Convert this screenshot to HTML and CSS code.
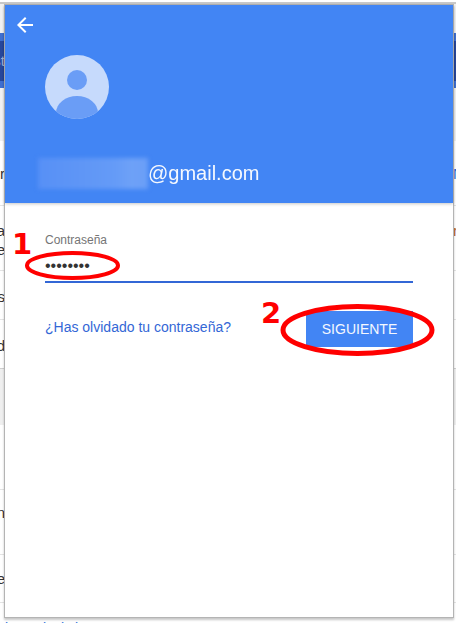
FILE: index.html
```html
<!DOCTYPE html>
<html lang="es">
<head>
<meta charset="utf-8">
<title>Contraseña</title>
<link rel="stylesheet" href="styles.css">
</head>
<body>
<div class="backdrop">
  <div class="bg-top"></div>
  <div class="bg-band"><div class="bg-band-dark"><span class="frag frag-muted"><span>st</span></span></div></div>
  <div class="bg-gray"></div>
  <div class="row r1"><span class="frag"><span>r</span></span><span class="edge edge-blue">N</span></div>
  <div class="row r2"><span class="frag"><span>ra</span><span>te</span></span><span class="edge edge-orange">r</span></div>
  <div class="row r3"><span class="frag"><span>os</span></span></div>
  <div class="row r4"><span class="frag"><span>d</span></span></div>
  <div class="bg-section"></div>
  <div class="row r4b"></div>
  <div class="row r5"><span class="frag"><span>n</span></span></div>
  <div class="row r6"><span class="frag"><span>e</span></span></div>
  <div class="r7"><span class="tip t1">l</span><span class="tip t2">l</span><span class="tip t3">l</span><span class="tip t4">l</span></div>
</div>

<main class="dialog">
  <header class="head">
    <button class="back" aria-label="Atrás">
      <svg viewBox="0 0 24 24" width="24" height="24"><path fill="#fff" d="M20 11H7.83l5.59-5.59L12 4l-8 8 8 8 1.41-1.41L7.83 13H20v-2z"/></svg>
    </button>
    <svg class="avatar" viewBox="0 0 64 64" width="64" height="64">
      <defs><clipPath id="disc"><circle cx="32" cy="32" r="32"/></clipPath></defs>
      <circle cx="32" cy="32" r="32" fill="#c6dafc"/>
      <circle cx="32" cy="25" r="10" fill="#6a9df6"/>
      <ellipse cx="32" cy="58" rx="21" ry="17" fill="#6a9df6" clip-path="url(#disc)"/>
    </svg>
    <div class="email"><span class="smudge"></span><span class="domain">@gmail.com</span></div>
  </header>
  <section class="form">
    <label class="label" for="pw">Contraseña</label>
    <input class="pw" id="pw" type="password" value="password" readonly>
    <div class="actions">
      <a class="forgot" href="#">¿Has olvidado tu contraseña?</a>
      <button class="next">SIGUIENTE</button>
    </div>
  </section>
</main>

<svg class="marks" width="456" height="623" viewBox="0 0 456 623">
  <ellipse cx="72.5" cy="265.5" rx="45.5" ry="12.5" fill="none" stroke="#f00" stroke-width="4"/>
  <ellipse cx="357.5" cy="330" rx="74.5" ry="23.5" fill="none" stroke="#f00" stroke-width="5"/>
</svg>
<span class="num num1">1</span>
<span class="num num2">2</span>
</body>
</html>
```
FILE: styles.css
```css
* { box-sizing: border-box; }
html, body { margin: 0; padding: 0; height: 623px; overflow: hidden; background: #fff; }
body { font-family: "Liberation Sans", Arial, sans-serif; position: relative; }

.backdrop { height: 623px; overflow: hidden; display: flex; flex-direction: column; }
.bg-top { height: 31px; margin-top: 2px; background: #f1f1f1; border-top: 2px solid #c8c8c8; flex: none; }
.bg-band { height: 55px; flex: none; background: #3f6fd0; padding-top: 8px; }
.bg-band-dark { height: 40px; background: #27479b; }
.bg-gray { height: 53px; flex: none; background: #f1f1f1; }
.row { flex: none; border-bottom: 1px solid #e4e4e4; font-size: 15px; line-height: 19px; color: #333; display: flex; justify-content: space-between; align-items: flex-start; }
.frag { display: flex; flex-direction: column; align-items: flex-end; width: 5px; overflow: hidden; }
.frag span { flex: none; white-space: nowrap; }
.frag-muted { color: #9fb0d8; padding-top: 10px; font-size: 15px; line-height: 19px; }
.edge { display: block; width: 3px; overflow: hidden; }
.edge-blue { color: #2f6fd8; }
.edge-orange { color: #b5652a; }
.r1 { height: 65px; padding-top: 23px; }
.r2 { height: 65px; padding-top: 15px; }
.r3 { height: 49px; padding-top: 16px; }
.r4 { height: 49px; padding-top: 16px; border-bottom: 1px solid #cfcfcf; }
.bg-section { height: 56px; flex: none; background: #efefef; }
.r4b { height: 65px; }
.r5 { height: 65px; padding-top: 13px; }
.r6 { height: 48px; padding-top: 14px; }
.r7 { flex: none; height: 20px; padding: 17px 0 0 5px; display: flex; font-size: 14px; line-height: 16px; color: #2f6fd8; }
.tip { display: block; width: 4px; }
.t2 { margin-left: 34px; }
.t3 { margin-left: 14px; }
.t4 { margin-left: 10px; }

.dialog {
  position: absolute; left: 5px; top: 5px; width: 448px; height: 612px;
  background: #fff; display: flex; flex-direction: column;
  box-shadow: 0 0 0 1px #b4b4b4, 0 2px 2px 1px rgba(0,0,0,.22);
}
.head {
  height: 198px; flex: none; background: #4285f4; position: relative; z-index: 1;
  padding: 8px 0 0 8px; display: flex; flex-direction: column; align-items: flex-start;
  box-shadow: 0 1px 3px rgba(0,0,0,.22);
}
.back { width: 24px; height: 24px; padding: 0; border: 0; background: none; display: block; }
.back svg { display: block; }
.avatar { display: block; margin: 18px 0 0 32px; flex: none; }
.email { display: flex; align-items: center; margin: 37px 0 0 25px; height: 34px; }
.smudge {
  display: block; width: 110px; height: 31px; filter: blur(2px);
  background: linear-gradient(90deg, #5790f6 0%, #5f96f6 40%, #659bf7 70%, #6ea1f7 85%, #6a9ef7 100%);
}
.domain { color: #fff; font-size: 20px; line-height: 24px; opacity: .95; }

.form { padding: 30px 40px 0; display: flex; flex-direction: column; align-items: stretch; }
.label { font-size: 12px; line-height: 14px; color: #757575; }
.pw {
  display: block; width: 100%; height: 36px; margin: 0; padding: 3px 0 0;
  border: 0; border-bottom: 2px solid #3367d6; outline: 0; background: none;
  font: 16px "Liberation Sans", Arial, sans-serif; color: #333;
}
.actions { display: flex; justify-content: space-between; align-items: center; margin-top: 28px; }
.forgot { color: #3367d6; font-size: 14px; text-decoration: none; padding-bottom: 4px; }
.next {
  width: 107px; height: 36px; padding: 0; border: 0; background: #4285f4; color: #f4f8ff;
  font: 14px "Liberation Sans", Arial, sans-serif;
}

.marks { position: absolute; left: 0; top: 0; pointer-events: none; }
.num { position: absolute; color: #f00; font: 700 29px/29px "DejaVu Sans", sans-serif; }
.num1 { left: 12px; top: 230px; }
.num2 { left: 261px; top: 299px; }
```
